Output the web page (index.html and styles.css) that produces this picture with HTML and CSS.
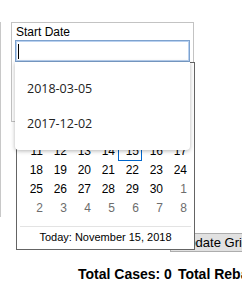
FILE: index.html
```html
<!DOCTYPE html>
<html lang="en">
<head>
    <meta charset="UTF-8">
    <meta name="viewport" content="width=device-width, initial-scale=1.0">
    <title>Rebates</title>
    <link rel="stylesheet" href="styles.css">
</head>
<body>
    <div class="page">
        <div class="rail"></div>
        <div class="main">
            <div class="filter">
                <label class="filter-label">Start Date</label>
                <div class="datefield">
                    <input class="date-input" type="text">
                    <span class="caret"></span>
                    <div class="calendar">
                        <div class="cal-nav"><span>&lsaquo;</span><span>November 2018</span><span>&rsaquo;</span></div>
                        <div class="cal-grid cal-week">
                            <span>Su</span><span>Mo</span><span>Tu</span><span>We</span><span>Th</span><span>Fr</span><span>Sa</span>
                        </div>
                        <div class="cal-grid">
                            <span class="other">28</span><span class="other">29</span><span class="other">30</span><span class="other">31</span><span>1</span><span>2</span><span>3</span>
                            <span>4</span><span>5</span><span>6</span><span>7</span><span>8</span><span>9</span><span>10</span>
                            <span>11</span><span>12</span><span>13</span><span>14</span><span class="today">15</span><span>16</span><span>17</span>
                            <span>18</span><span>19</span><span>20</span><span>21</span><span>22</span><span>23</span><span>24</span>
                            <span>25</span><span>26</span><span>27</span><span>28</span><span>29</span><span>30</span><span class="other">1</span>
                            <span class="other">2</span><span class="other">3</span><span class="other">4</span><span class="other">5</span><span class="other">6</span><span class="other">7</span><span class="other">8</span>
                        </div>
                        <div class="cal-foot">Today: November 15, 2018</div>
                    </div>
                    <ul class="suggest">
                        <li>2018-03-05</li>
                        <li>2017-12-02</li>
                    </ul>
                </div>
            </div>
            <div class="actions"><button class="btn">Update Grid</button></div>
            <p class="totals"><b>Total Cases: 0</b><b class="total-next">Total Rebates: $0.00</b></p>
        </div>
    </div>
</body>
</html>
```

FILE: styles.css
```css
html, body{
    margin: 0;
    overflow: hidden;
}
body{
    font-family: "Liberation Sans", Arial, sans-serif;
    color: #000;
    background: #fff;
}
.page{
    display: flex;
    align-items: flex-start;
}
.rail{
    width: 1px;
    height: 195px;
    margin-top: 22px;
    background: #c8c8c8;
    flex: none;
}
.main{
    margin: 22px 0 0 10px;
    flex: none;
}
.filter{
    width: 183px;
    height: 100px;
    box-sizing: border-box;
    border: 1px solid #c3c3c3;
    padding: 2px 3px;
}
.filter-label{
    display: block;
    font-size: 12px;
    line-height: 15px;
    padding-left: 1px;
}
.datefield{
    position: relative;
    z-index: 2;
    width: 175px;
}
.date-input{
    display: block;
    width: 175px;
    height: 22px;
    box-sizing: border-box;
    margin: 0;
    border: 1px solid #7da2ce;
    box-shadow: inset 0 0 0 1px #b9d1f0;
    outline: none;
    padding: 0 3px;
    font: 12px "Liberation Sans", Arial, sans-serif;
}
.caret{
    position: absolute;
    left: 3px;
    top: 4px;
    width: 1px;
    height: 15px;
    background: #000;
}

/* calendar popup */
.calendar{
    position: absolute;
    left: 1px;
    top: 100%;
    width: 179px;
    height: 188px;
    box-sizing: border-box;
    border: 1px solid #646464;
    background: #fff;
    font-size: 12px;
}
.cal-nav{
    height: 22px;
    display: flex;
    justify-content: space-between;
    align-items: center;
    padding: 0 8px;
    font-weight: bold;
}
.cal-grid{
    display: grid;
    grid-template-columns: repeat(7, 24px);
    margin-left: 5px;
}
.cal-grid>span{
    height: 19px;
    line-height: 19px;
    text-align: right;
    padding-right: 3px;
    box-sizing: border-box;
}
.cal-grid>span.other{
    color: #6d6d6d;
}
.cal-grid>span.today{
    border: 1px solid #0066cc;
    line-height: 17px;
    padding-right: 2px;
}
.cal-week>span{
    font-weight: bold;
}
.cal-foot{
    margin: 8px 3px 0;
    border-top: 1px solid #e3e3e3;
    padding-top: 4px;
    font-size: 11px;
    line-height: 13px;
    text-align: center;
}

/* autocomplete list */
.suggest{
    position: absolute;
    left: 0;
    top: 100%;
    width: 175px;
    height: 88px;
    box-sizing: border-box;
    margin: 0;
    padding: 9px 0;
    list-style: none;
    background: #fff;
    border-radius: 0 0 4px 4px;
    box-shadow: 0 1px 4px rgba(0, 0, 0, 0.3);
    font-family: "Open Sans", "Noto Sans", sans-serif;
    font-size: 12.5px;
    color: #222;
}
.suggest>li{
    height: 35px;
    line-height: 35px;
    padding-left: 12px;
}

.actions{
    margin: 111px 0 0 159px;
    white-space: nowrap;
}
.btn{
    height: 19px;
    padding: 0 8px;
    border: 1px solid #adadad;
    background: #e1e1e1;
    font: 13px "Liberation Sans", Arial, sans-serif;
    color: #000;
    line-height: 17px;
}
.totals{
    margin: 14px 0 0 67px;
    font-size: 14px;
    line-height: 16px;
    white-space: nowrap;
}
.total-next{
    margin-left: 6px;
}
```
